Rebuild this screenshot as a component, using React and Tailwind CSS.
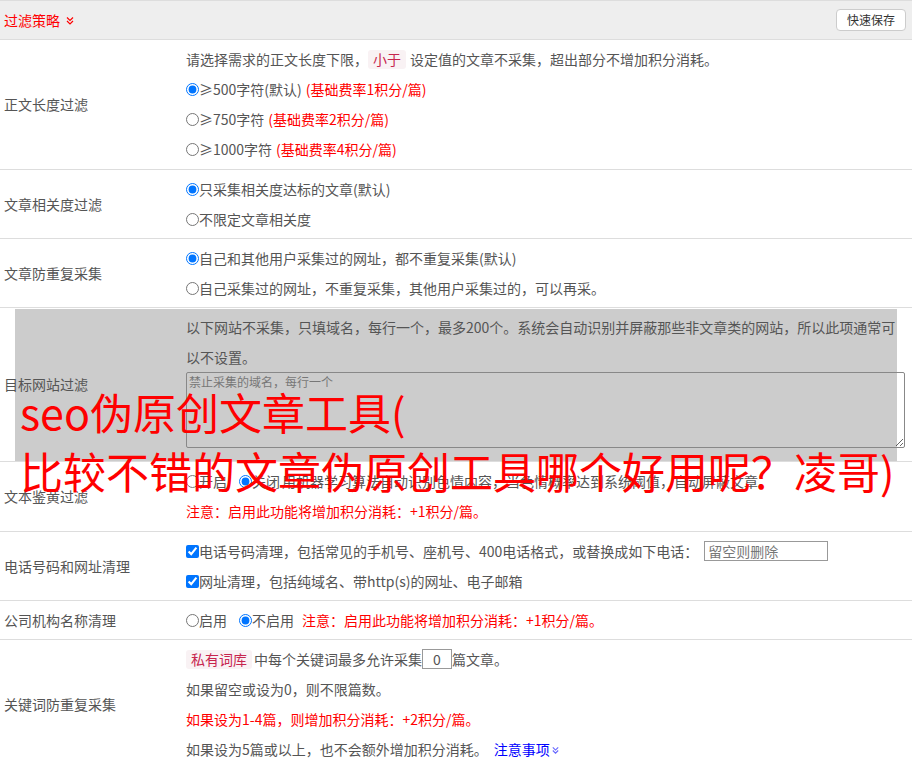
import React from 'react';

const DoubleDown = ({ className }) => (
    <svg viewBox="0 0 10 10" className={className} fill="none" stroke="currentColor" strokeWidth="1.2">
        <path d="M2 1.5 L5 4.5 L8 1.5" />
        <path d="M2 5 L5 8 L8 5" />
    </svg>
);

const Row = ({ label, children, pad = 'pt-1 pb-1' }) => (
    <div className="relative grid grid-cols-[186px_1fr] border-b border-[#dddddd]">
        <div className="relative z-10 flex items-center pl-1 text-[#555555]">{label}</div>
        <div className={`relative z-10 ${pad} pr-[7px] leading-[30px] text-[#555555]`}>{children}</div>
    </div>
);

const Line = ({ children, className = '' }) => (
    <div className={`flex items-center h-[30px] whitespace-nowrap ${className}`}>{children}</div>
);

const Radio = ({ name, checked }) => (
    <input type="radio" name={name} defaultChecked={checked} className="m-0 w-[13px] h-[13px] shrink-0" />
);

const Check = () => (
    <input type="checkbox" defaultChecked className="m-0 w-[13px] h-[13px] shrink-0" />
);

const Code = ({ children }) => (
    <span className="inline-block px-[5px] leading-[19px] rounded-[3px] bg-[#f9f2f4] text-[#c7254e]">{children}</span>
);

export default function App() {
    return (
        <div className="relative w-[912px] h-[768px] overflow-hidden bg-white text-[14px] font-['Noto_Sans_CJK_SC','Noto_Sans',sans-serif]">
            {/* header */}
            <div className="flex items-center justify-between h-[40px] border-t border-b border-[#dddddd] bg-[#eeeeee] pl-1 pr-[6px]">
                <div className="flex items-center text-[#ff0000]">
                    <span>过滤策略</span>
                    <DoubleDown className="w-[10px] h-[10px] ml-[5px] mt-[1px]" />
                </div>
                <button className="h-[22px] px-[10px] border border-[#cccccc] rounded-[4px] bg-white text-[12px] text-[#333333] leading-[20px]">
                    快速保存
                </button>
            </div>

            <Row label="正文长度过滤" pad="pt-1 pb-[5px]">
                <Line>
                    <span>请选择需求的正文长度下限，</span>
                    <Code>小于</Code>
                    <span className="ml-[4px]">设定值的文章不采集，超出部分不增加积分消耗。</span>
                </Line>
                <Line><Radio name="len" checked /><span>≥500字符(默认)</span><span className="ml-[4px] text-[#ff0000]">(基础费率1积分/篇)</span></Line>
                <Line><Radio name="len" /><span>≥750字符</span><span className="ml-[4px] text-[#ff0000]">(基础费率2积分/篇)</span></Line>
                <Line><Radio name="len" /><span>≥1000字符</span><span className="ml-[4px] text-[#ff0000]">(基础费率4积分/篇)</span></Line>
            </Row>

            <Row label="文章相关度过滤">
                <Line><Radio name="rel" checked /><span>只采集相关度达标的文章(默认)</span></Line>
                <Line><Radio name="rel" /><span>不限定文章相关度</span></Line>
            </Row>

            <Row label="文章防重复采集">
                <Line><Radio name="dup" checked /><span>自己和其他用户采集过的网址，都不重复采集(默认)</span></Line>
                <Line><Radio name="dup" /><span>自己采集过的网址，不重复采集，其他用户采集过的，可以再采。</span></Line>
            </Row>

            <Row label="目标网站过滤">
                <div className="leading-[30px]">
                    以下网站不采集，只填域名，每行一个，最多200个。系统会自动识别并屏蔽那些非文章类的网站，所以此项通常可以不设置。
                </div>
                <textarea
                    placeholder="禁止采集的域名，每行一个"
                    className="block w-full h-[76px] mb-[9px] border border-[#888888] rounded-[2px] bg-transparent px-[2px] py-0 text-[12px] leading-[18px] placeholder:text-[#777777] outline-none"
                />
            </Row>

            <Row label="文本鉴黄过滤" pad="pt-1 pb-[5px]">
                <Line>
                    <Radio name="porn" /><span>开启</span>
                    <span className="ml-[12px] flex items-center"><Radio name="porn" checked /><span>关闭</span></span>
                    <span className="ml-[2px]">用机器学习算法自动识别色情内容，当色情概率达到系统阈值，自动屏蔽文章。</span>
                </Line>
                <Line className="text-[#ff0000]">注意：启用此功能将增加积分消耗：+1积分/篇。</Line>
            </Row>

            <Row label="电话号码和网址清理">
                <Line>
                    <Check /><span>电话号码清理，包括常见的手机号、座机号、400电话格式，或替换成如下电话：</span>
                    <input
                        placeholder="留空则删除"
                        className="ml-[6px] w-[124px] h-[20px] border border-[#999999] px-[3px] text-[14px] leading-[18px] placeholder:text-[#777777] outline-none"
                    />
                </Line>
                <Line><Check /><span>网址清理，包括纯域名、带http(s)的网址、电子邮箱</span></Line>
            </Row>

            <Row label="公司机构名称清理">
                <Line>
                    <Radio name="org" /><span>启用</span>
                    <span className="ml-[12px] flex items-center"><Radio name="org" checked /><span>不启用</span></span>
                    <span className="ml-[8px] text-[#ff0000]">注意：启用此功能将增加积分消耗：+1积分/篇。</span>
                </Line>
            </Row>

            <Row label="关键词防重复采集">
                <Line>
                    <Code>私有词库</Code>
                    <span className="ml-[2px]">中每个关键词最多允许采集</span>
                    <input
                        defaultValue="0"
                        className="w-[30px] h-[20px] border border-[#999999] text-center text-[14px] leading-[18px] outline-none"
                    />
                    <span>篇文章。</span>
                </Line>
                <Line>如果留空或设为0，则不限篇数。</Line>
                <Line className="text-[#ff0000]">如果设为1-4篇，则增加积分消耗：+2积分/篇。</Line>
                <Line>
                    <span>如果设为5篇或以上，也不会额外增加积分消耗。</span>
                    <span className="ml-[6px] flex items-center text-[#0000ff]">
                        注意事项
                        <DoubleDown className="w-[9px] h-[9px] ml-[1px] mt-[2px] text-[#6666ff]" />
                    </span>
                </Line>
            </Row>

            {/* gray block behind the target-site row */}
            <div className="absolute left-[15px] top-[309px] w-[882px] h-[152px] bg-[#cccccc] z-0" />

            {/* red caption overlay */}
            <div className="absolute left-[20px] top-[382px] z-20 text-[43px] leading-[59px] text-[#ff0000] whitespace-nowrap pointer-events-none">
                seo伪原创文章工具(<br />比较不错的文章伪原创工具哪个好用呢？凌哥)
            </div>
        </div>
    );
}
